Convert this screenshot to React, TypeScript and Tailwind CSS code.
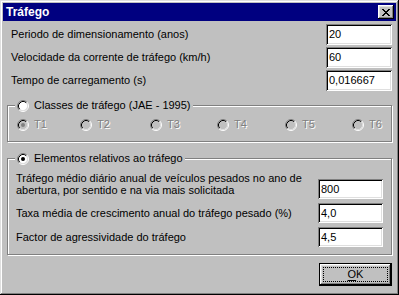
import React from "react";

const font = "font-['Liberation_Sans',Arial,sans-serif]";

function Radio({ checked = false, disabled = false }: { checked?: boolean; disabled?: boolean }) {
  return (
    <svg width="12" height="12" viewBox="0 0 12 12" className="shrink-0">
      <circle cx="6" cy="6" r="4.5" fill={disabled ? "#c0c0c0" : "#ffffff"} />
      <path d="M 2.11 9.89 A 5.5 5.5 0 0 1 9.89 2.11" fill="none" stroke="#808080" strokeWidth="1" />
      <path d="M 9.89 2.11 A 5.5 5.5 0 0 1 2.11 9.89" fill="none" stroke="#ffffff" strokeWidth="1" />
      <path d="M 2.82 9.18 A 4.5 4.5 0 0 1 9.18 2.82" fill="none" stroke="#000000" strokeWidth="1" />
      <path d="M 9.18 2.82 A 4.5 4.5 0 0 1 2.82 9.18" fill="none" stroke="#dfdfdf" strokeWidth="1" />
      {checked && <circle cx="6" cy="6" r="2" fill={disabled ? "#808080" : "#000000"} />}
    </svg>
  );
}

function Edit({ value, w, h }: { value: string; w: string; h: string }) {
  return (
    <div
      className={`${w} ${h} shrink-0 bg-white flex items-center pl-[3px] text-[11px] text-black shadow-[inset_1px_1px_#808080,inset_-1px_-1px_#ffffff,inset_2px_2px_#000000,inset_-2px_-2px_#dfdfdf]`}
    >
      {value}
    </div>
  );
}

function TRadio({ label, checked, w }: { label: string; checked?: boolean; w: string }) {
  return (
    <div className={`flex items-center gap-[5px] ${w}`}>
      <Radio checked={checked} disabled />
      <span className="text-[#808080] [text-shadow:1px_1px_0_#ffffff] leading-[13px]">{label}</span>
    </div>
  );
}

function CloseGlyph() {
  const rows = [
    "XX....XX",
    ".XX..XX.",
    "..XXXX..",
    "...XX...",
    "..XXXX..",
    ".XX..XX.",
    "XX....XX",
  ];
  const rects: React.ReactElement[] = [];
  rows.forEach((r, y) =>
    r.split("").forEach((c, x) => {
      if (c === "X") rects.push(<rect key={`${x}-${y}`} x={x} y={y} width="1" height="1" fill="#000" />);
    })
  );
  return (
    <svg width="8" height="7" viewBox="0 0 8 7" shapeRendering="crispEdges">
      {rects}
    </svg>
  );
}

export default function App() {
  return (
    <div
      className={`${font} w-[399px] h-[295px] bg-[#c0c0c0] p-[3px] flex flex-col text-[11px] text-black whitespace-nowrap shadow-[inset_-1px_-1px_#000000,inset_1px_1px_#dfdfdf,inset_-2px_-2px_#808080,inset_2px_2px_#ffffff]`}
    >
      {/* Title bar */}
      <div className="h-[18px] bg-[#000080] flex items-center justify-between pl-[3px] pr-[2px] shrink-0">
        <span className="text-white font-bold text-[12px] leading-none">Tráfego</span>
        <div className="w-[16px] h-[14px] bg-[#c0c0c0] flex items-center justify-center shadow-[inset_-1px_-1px_#000000,inset_1px_1px_#ffffff,inset_-2px_-2px_#808080,inset_2px_2px_#dfdfdf]">
          <div className="ml-[-1px]">
            <CloseGlyph />
          </div>
        </div>
      </div>

      {/* Top rows */}
      <div className="flex flex-col gap-[2px] mt-[3px] pl-[8px] pr-[4px]">
        <div className="flex items-center justify-between">
          <span>Periodo de dimensionamento (anos)</span>
          <Edit value="20" w="w-[66px]" h="h-[21px]" />
        </div>
        <div className="flex items-center justify-between">
          <span>Velocidade da corrente de tráfego (km/h)</span>
          <Edit value="60" w="w-[66px]" h="h-[21px]" />
        </div>
        <div className="flex items-center justify-between">
          <span>Tempo de carregamento (s)</span>
          <Edit value="0,016667" w="w-[66px]" h="h-[21px]" />
        </div>
      </div>

      {/* Group 1 */}
      <div className="relative shrink-0 mt-[14px] ml-[4px] mr-[4px] h-[37px] border border-[#808080] shadow-[1px_1px_0_#ffffff,inset_1px_1px_0_#ffffff] pt-[12px] pl-[9px]">
        <div className="absolute left-[7px] top-[-7px] flex items-center gap-[5px] bg-[#c0c0c0] px-[2px] h-[13px]">
          <Radio />
          <span className="leading-[13px]">Classes de tráfego (JAE - 1995)</span>
        </div>
        <div className="flex items-center h-[13px]">
          <TRadio label="T1" checked w="w-[63px]" />
          <TRadio label="T2" w="w-[70px]" />
          <TRadio label="T3" w="w-[67px]" />
          <TRadio label="T4" w="w-[68px]" />
          <TRadio label="T5" w="w-[67px]" />
          <TRadio label="T6" w="w-auto" />
        </div>
      </div>

      {/* Group 2 */}
      <div className="relative shrink-0 mt-[16px] ml-[4px] mr-[4px] h-[97px] border border-[#808080] shadow-[1px_1px_0_#ffffff,inset_1px_1px_0_#ffffff] pt-[20px] pl-[8px] pr-[8px] flex flex-col gap-[4px]">
        <div className="absolute left-[7px] top-[-7px] flex items-center gap-[5px] bg-[#c0c0c0] px-[2px] h-[13px]">
          <Radio checked />
          <span className="leading-[13px]">Elementos relativos ao tráfego</span>
        </div>
        <div className="flex items-end justify-between h-[20px]">
          <span className="leading-[12px] mb-[3px]">
            Tráfego médio diário anual de veículos pesados no ano de
            <br />
            abertura, por sentido e na via mais solicitada
          </span>
          <Edit value="800" w="w-[65px]" h="h-[20px]" />
        </div>
        <div className="flex items-center justify-between">
          <span>Taxa média de crescimento anual do tráfego pesado (%)</span>
          <Edit value="4,0" w="w-[65px]" h="h-[20px]" />
        </div>
        <div className="flex items-center justify-between">
          <span>Factor de agressividade do tráfego</span>
          <Edit value="4,5" w="w-[65px]" h="h-[20px]" />
        </div>
      </div>

      {/* OK button */}
      <div className="flex justify-end mt-[8px] mr-[4px]">
        <div className="w-[73px] h-[23px] bg-[#c0c0c0] p-[4px] shadow-[inset_1px_1px_#000000,inset_-1px_-1px_#000000,inset_-2px_-2px_#000000,inset_2px_2px_#ffffff,inset_-3px_-3px_#808080,inset_3px_3px_#dfdfdf]">
          <div className="w-full h-full border border-dotted border-black flex items-center justify-center">
            <span className="leading-none">
              <span className="underline underline-offset-[2px]">O</span>K
            </span>
          </div>
        </div>
      </div>
    </div>
  );
}
